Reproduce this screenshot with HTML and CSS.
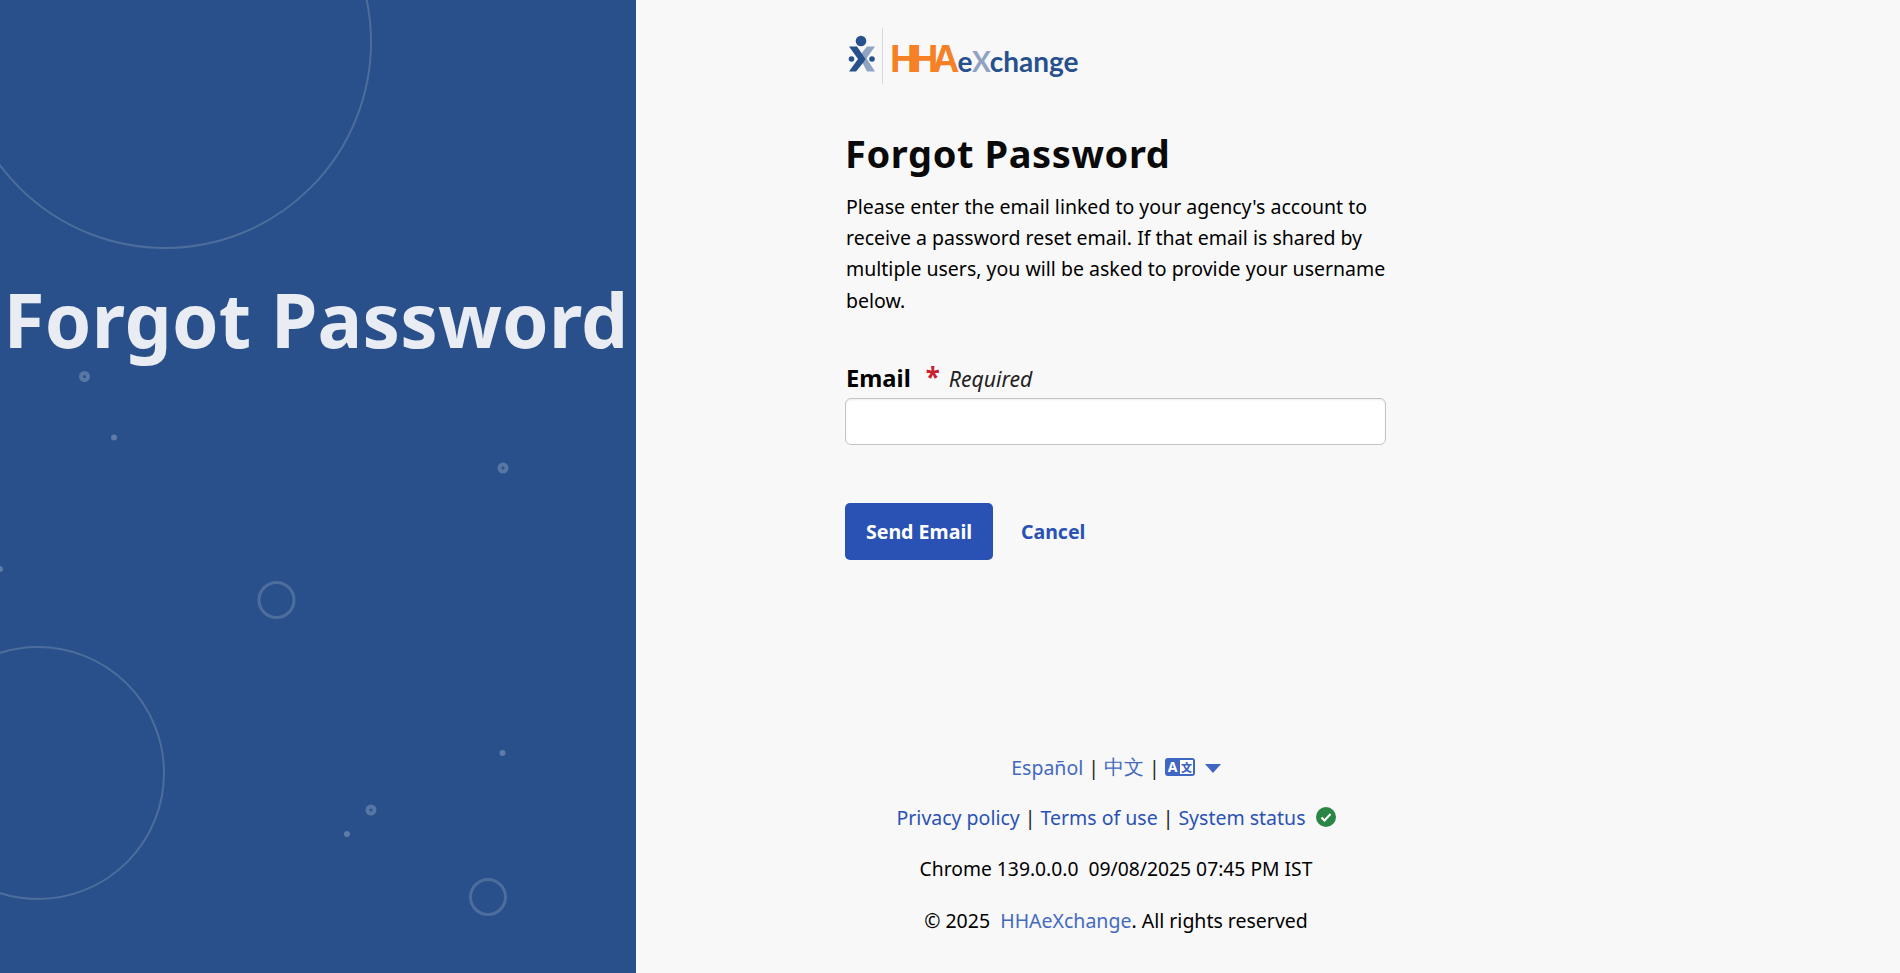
FILE: index.html

```html
<!DOCTYPE html>
<html>
<head>
    <title>Forgot Password</title>
    <link rel="stylesheet" href="styles.css">
</head>
<body>
<div class="page">
    <div class="banner">
        <svg class="bubbles" width="636" height="973" viewBox="0 0 636 973">
            <circle class="thin" cx="165" cy="42" r="206" />
            <circle class="thin" cx="38" cy="773" r="126" />
            <circle class="ring" cx="276.500" cy="600" r="17.500" />
            <circle class="ring" cx="488" cy="897" r="17.500" />
            <circle class="dot" cx="84.500" cy="376.500" r="3.500" />
            <circle class="dot" cx="503" cy="468" r="3.500" />
            <circle class="dot" cx="371" cy="810" r="3.500" />
            <circle class="speck" cx="114" cy="437.500" r="3" />
            <circle class="speck" cx="0" cy="569" r="3" />
            <circle class="speck" cx="502.500" cy="753" r="3" />
            <circle class="speck" cx="347" cy="834" r="3" />
        </svg>
        <div class="banner-title">Forgot Password</div>
    </div>
    <div class="main">
        <div class="column">
            <svg class="logo" width="236" height="60" viewBox="0 0 236 60">
                <circle cx="15" cy="13" r="5.300" fill="#27508c" />
                <circle cx="5.500" cy="31" r="2.800" fill="#27508c" />
                <circle cx="26" cy="31" r="2.800" fill="#27508c" />
                <polygon points="21,18.500 29,18.500 20,31 15,26" fill="#8fa3c2" />
                <polygon points="15,32 19,28 29,43.500 21,43.500" fill="#8fa3c2" />
                <polygon points="3,18.500 11,18.500 19.500,31 17,35 10,43.500 3,43.500 12,31" fill="#27508c" />
                <rect x="36" y="0" width="1" height="56" fill="#d3dbe3" />
                <text class="logo-hha" x="44" y="43.500">HHA</text>
                <text class="logo-rest" x="111.500" y="43.500">e<tspan fill="#8fa3c2">X</tspan>change</text>
            </svg>
            <h1 class="heading">Forgot Password</h1>
            <p class="intro">Please enter the email linked to your agency's account to receive a password reset email. If that email is shared by multiple users, you will be asked to provide your username below.</p>
            <div class="label-row">
                <label class="field-label" for="email">Email</label>
                <span class="star">*</span>
                <span class="required">Required</span>
            </div>
            <input class="field" id="email" type="text">
            <div class="actions">
                <button class="send" type="button">Send Email</button>
                <a class="cancel" href="#">Cancel</a>
            </div>
            <div class="footer">
                <div class="footer-row langs">
                    <a href="#">Español</a>
                    <span class="sep">|</span>
                    <a href="#">中文</a>
                    <span class="sep">|</span>
                    <svg class="lang-icon" width="30" height="18" viewBox="0 0 30 18">
                        <rect width="30" height="18" rx="3" fill="#3f66c0" />
                        <rect x="15" y="2" width="13" height="14" fill="#fff" />
                        <text class="lang-a" x="7.500" y="14" text-anchor="middle">A</text>
                        <text class="lang-z" x="21.500" y="13.500" text-anchor="middle">文</text>
                    </svg>
                    <span class="caret"></span>
                </div>
                <div class="footer-row policy">
                    <a href="#">Privacy policy</a>
                    <span class="sep">|</span>
                    <a href="#">Terms of use</a>
                    <span class="sep">|</span>
                    <a href="#">System status</a>
                    <svg class="status" width="20" height="20" viewBox="0 0 20 20">
                        <circle cx="10" cy="10" r="10" fill="#2b8544" />
                        <path d="M5.500 10.500l3 3 6-6.500" fill="none" stroke="#fff" stroke-width="2" />
                    </svg>
                </div>
                <div class="footer-row browser">Chrome 139.0.0.0&nbsp; 09/08/2025 07:45 PM IST</div>
                <div class="footer-row copyright">© 2025 &nbsp;<a class="home" href="#">HHAeXchange</a>. All rights reserved</div>
            </div>
        </div>
    </div>
</div>
</body>
</html>
```

FILE: styles.css

```css
* { box-sizing: border-box; }
html, body { margin: 0; padding: 0; }
body { background-color: #f8f8f8; color: #000; font-family: "Noto Sans", sans-serif; font-size: 19.500px; }
a { text-decoration: none; }

.page { display: flex; height: 973px; overflow: hidden; }

.banner { position: relative; width: 636px; flex: none; background-color: #29508a; padding: 269px 4px 0 0; overflow: hidden; }
.bubbles { position: absolute; top: 0; left: 0; }
.bubbles .thin { fill: none; stroke: rgba(255,255,255,.17); stroke-width: 2; }
.bubbles .ring { fill: none; stroke: rgba(255,255,255,.17); stroke-width: 3; }
.bubbles .dot { fill: none; stroke: rgba(255,255,255,.22); stroke-width: 4; }
.bubbles .speck { fill: rgba(255,255,255,.25); }
.banner-title { position: relative; font-size: 74.700px; font-weight: 700; line-height: 100px; text-align: center; color: #e9edf3; letter-spacing: .2px; white-space: nowrap; }

.main { flex: 1; padding-left: 209px; }
.column { width: 541px; }

.logo { display: block; margin-top: 28px; margin-left: 1px; }
.logo-hha { font-family: "Liberation Sans", sans-serif; font-size: 38px; font-weight: 700; letter-spacing: -6.500px; fill: #f58025; }
.logo-rest { font-family: Lato, sans-serif; font-size: 28px; font-weight: 700; fill: #27508c; }

.heading { margin: 39px 0 0 0; font-size: 38px; line-height: 52px; font-weight: 700; letter-spacing: .6px; color: #0a0a0a; }
.intro { margin: 12px 0 0 1px; font-size: 19.500px; line-height: 31.200px; }

.label-row { display: flex; align-items: baseline; margin: 42px 0 0 1px; padding-top: 4px; height: 40px; }
.field-label { font-size: 23.700px; font-weight: 700; }
.star { margin-left: 15px; color: #c8202f; font-size: 26px; font-weight: 700; line-height: 20px; }
.required { margin-left: 9px; color: #222; font-size: 21.200px; font-style: italic; }

.field { display: block; width: 541px; height: 47px; background-color: #fff; border: 1px solid #c4c4c4; border-radius: 6px; box-shadow: inset 0 1px 2px rgba(0,0,0,.08); }

.actions { display: flex; align-items: center; margin-top: 58px; }
.send { width: 148px; height: 57px; background-color: #2a52b4; color: #fff; border: 0; border-radius: 5px; font-family: "Noto Sans", sans-serif; font-size: 19.600px; font-weight: 700; }
.cancel { margin-left: 28px; color: #2a52b4; font-size: 19.500px; font-weight: 700; }

.footer { margin-top: 183px; padding-left: 1px; text-align: center; }
.footer-row { display: flex; align-items: center; justify-content: center; height: 51px; white-space: pre; }
.footer-row a { color: #2a52b4; }
.langs { height: 49px; }
.browser { font-size: 19.300px; }
.copyright { margin-top: 1px; }
.langs a, .home { color: #4469c1 !important; }
.sep { margin: 0 5px; color: #222; }
.lang-a { font-family: "Noto Sans", sans-serif; font-size: 14px; font-weight: 700; fill: #fff; }
.lang-z { font-family: "Noto Sans CJK SC", sans-serif; font-size: 11px; font-weight: 900; fill: #3f66c0; }
.caret { width: 0; height: 0; margin: 3px 0 0 10px; border-left: 8px solid transparent; border-right: 8px solid transparent; border-top: 9px solid #3f66c0; }
.status { margin-left: 10px; }
```
